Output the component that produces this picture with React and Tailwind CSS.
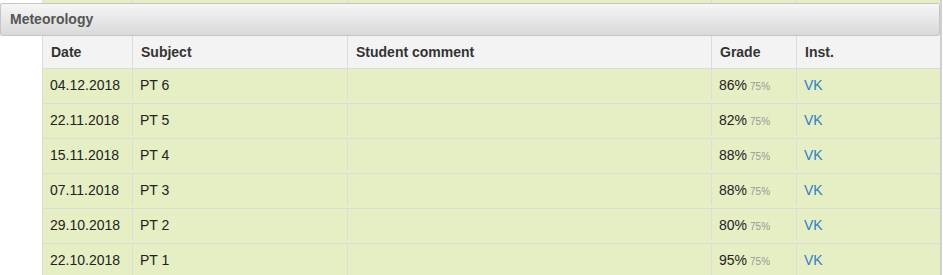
import React from "react";

const rows = [
  ["04.12.2018", "PT 6", "86%"],
  ["22.11.2018", "PT 5", "82%"],
  ["15.11.2018", "PT 4", "88%"],
  ["07.11.2018", "PT 3", "88%"],
  ["29.10.2018", "PT 2", "80%"],
  ["22.10.2018", "PT 1", "95%"],
];

const font = { fontFamily: '"Liberation Sans", Arial, sans-serif' };

export default function App() {
  return (
    <div className="w-[943px] h-[275px] overflow-hidden bg-white text-[14px]" style={font}>
      <div className="w-[942px] border-r-2 border-[#cfcfcf] h-[275px]">
        {/* top strip (previous table's tail) */}
        <div className="ml-[42px] h-[3px] flex bg-[#e6eec4] border-l border-[#dcdcdc]">
          <div className="w-[90px] border-r border-[#dcdcdc]" />
          <div className="w-[215px] border-r border-[#dcdcdc]" />
          <div className="w-[364px] border-r border-[#dcdcdc]" />
          <div className="w-[85px] border-r border-[#dcdcdc]" />
          <div className="flex-1" />
        </div>
        {/* section header */}
        <div className="h-[33px] border border-[#c6c6c6] rounded-[2px] bg-gradient-to-b from-[#f6f6f6] to-[#d9d9d9] flex items-center pl-[9px]">
          <span className="font-bold text-[#555555] text-[14px]">Meteorology</span>
        </div>
        {/* table */}
        <div className="ml-[42px] border-l border-[#dcdcdc]">
          <div className="flex h-[33px] bg-[#f3f3f3] border-b border-[#dcdcdc] font-bold text-[#333333]">
            <div className="w-[90px] border-r border-[#dcdcdc] pl-[8px] flex items-center">Date</div>
            <div className="w-[215px] border-r border-[#dcdcdc] pl-[8px] flex items-center">Subject</div>
            <div className="w-[364px] border-r border-[#dcdcdc] pl-[8px] flex items-center">Student comment</div>
            <div className="w-[85px] border-r border-[#dcdcdc] pl-[8px] flex items-center">Grade</div>
            <div className="flex-1 pl-[8px] flex items-center">Inst.</div>
          </div>
          {rows.map((r) => (
            <div key={r[0]} className="flex h-[35px] pb-[2px] bg-[#e6eec4] border-b border-[#dcdcdc] text-[#222222]">
              <div className="w-[90px] border-r border-[#dcdcdc] pl-[7px] flex items-center">{r[0]}</div>
              <div className="w-[215px] border-r border-[#dcdcdc] pl-[7px] flex items-center">{r[1]}</div>
              <div className="w-[364px] border-r border-[#dcdcdc]" />
              <div className="w-[85px] border-r border-[#dcdcdc] pl-[7px] flex items-center">
                <span>{r[2]}</span>
                <span className="ml-[3px] text-[10px] text-[#999999] mt-[2px]">75%</span>
              </div>
              <div className="flex-1 pl-[7px] flex items-center text-[#2f80c6]">VK</div>
            </div>
          ))}
        </div>
      </div>
    </div>
  );
}
